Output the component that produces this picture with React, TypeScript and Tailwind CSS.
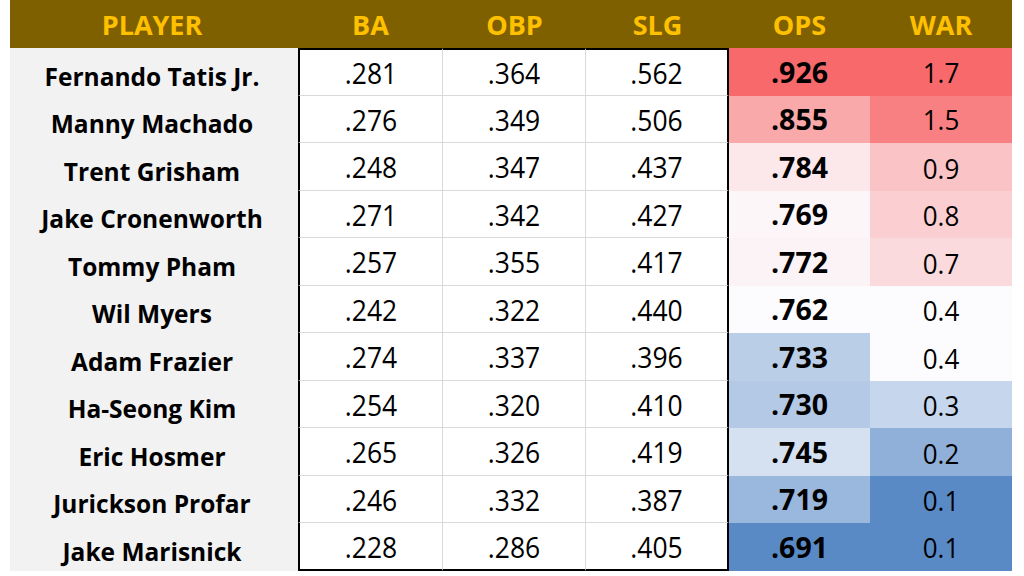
import React from 'react';

type Row = {
    name: string;
    ba: string;
    obp: string;
    slg: string;
    ops: string;
    opsBg: string;
    war: string;
    warBg: string;
};

// colour scale copied from the sheet (red = high, blue = low)
const rows: Row[] = [
    { name: 'Fernando Tatis Jr.', ba: '.281', obp: '.364', slg: '.562', ops: '.926', opsBg: 'bg-[#f8696b]', war: '1.7', warBg: 'bg-[#f8696b]' },
    { name: 'Manny Machado', ba: '.276', obp: '.349', slg: '.506', ops: '.855', opsBg: 'bg-[#faa9ab]', war: '1.5', warBg: 'bg-[#f98082]' },
    { name: 'Trent Grisham', ba: '.248', obp: '.347', slg: '.437', ops: '.784', opsBg: 'bg-[#fce8eb]', war: '0.9', warBg: 'bg-[#fac3c6]' },
    { name: 'Jake Cronenworth', ba: '.271', obp: '.342', slg: '.427', ops: '.769', opsBg: 'bg-[#fcf6f9]', war: '0.8', warBg: 'bg-[#fbcfd1]' },
    { name: 'Tommy Pham', ba: '.257', obp: '.355', slg: '.417', ops: '.772', opsBg: 'bg-[#fcf3f6]', war: '0.7', warBg: 'bg-[#fbdadd]' },
    { name: 'Wil Myers', ba: '.242', obp: '.322', slg: '.440', ops: '.762', opsBg: 'bg-[#fcfcff]', war: '0.4', warBg: 'bg-[#fcfcff]' },
    { name: 'Adam Frazier', ba: '.274', obp: '.337', slg: '.396', ops: '.733', opsBg: 'bg-[#bacee8]', war: '0.4', warBg: 'bg-[#fcfcff]' },
    { name: 'Ha-Seong Kim', ba: '.254', obp: '.320', slg: '.410', ops: '.730', opsBg: 'bg-[#b3c9e5]', war: '0.3', warBg: 'bg-[#c6d6ec]' },
    { name: 'Eric Hosmer', ba: '.265', obp: '.326', slg: '.419', ops: '.745', opsBg: 'bg-[#d5e1f1]', war: '0.2', warBg: 'bg-[#90b0d9]' },
    { name: 'Jurickson Profar', ba: '.246', obp: '.332', slg: '.387', ops: '.719', opsBg: 'bg-[#9ab7dd]', war: '0.1', warBg: 'bg-[#5a8ac6]' },
    { name: 'Jake Marisnick', ba: '.228', obp: '.286', slg: '.405', ops: '.691', opsBg: 'bg-[#5a8ac6]', war: '0.1', warBg: 'bg-[#5a8ac6]' },
];

const headers = ['PLAYER', 'BA', 'OBP', 'SLG', 'OPS', 'WAR'];

export default function App() {
    return (
        <div className="w-[1024px] h-[576px] bg-white pl-[10px] font-['Open_Sans',sans-serif] text-black">
            <div className="grid grid-cols-[288px_145px_143px_143px_141px_142px] grid-rows-[48px_repeat(11,47.5px)]">
                {headers.map((h, i) => (
                    <div key={h} className={`bg-[#7f6000] flex items-center justify-center ${i === 0 ? 'pr-1' : ''}`}>
                        <span className="text-[27px] font-bold text-[#ffc000] leading-none">{h}</span>
                    </div>
                ))}

                {rows.map((r, i) => {
                    const first = i === 0;
                    const last = i === rows.length - 1;
                    const mid = [
                        first ? 'border-t-2 border-t-black' : '',
                        last ? 'border-b-2 border-b-black' : 'border-b border-b-[#d9d9d9]',
                    ].join(' ');
                    return (
                        <React.Fragment key={r.name}>
                            <div className="bg-[#f2f2f2] flex items-center justify-center pr-1 pt-[10px]">
                                <span className="text-[24.5px] font-bold leading-none">{r.name}</span>
                            </div>
                            <div className={`flex items-center justify-center pt-[2px] border-l-2 border-l-black border-r border-r-[#d9d9d9] ${mid}`}>
                                <span className="inline-block scale-y-[1.1] text-[26.5px] leading-none">{r.ba}</span>
                            </div>
                            <div className={`flex items-center justify-center pt-[2px] border-r border-r-[#d9d9d9] ${mid}`}>
                                <span className="inline-block scale-y-[1.1] text-[26.5px] leading-none">{r.obp}</span>
                            </div>
                            <div className={`flex items-center justify-center pt-[2px] border-r-2 border-r-black ${mid}`}>
                                <span className="inline-block scale-y-[1.1] text-[26.5px] leading-none">{r.slg}</span>
                            </div>
                            <div className={`flex items-center justify-center ${r.opsBg}`}>
                                <span className="text-[28.5px] font-bold leading-none">{r.ops}</span>
                            </div>
                            <div className={`flex items-center justify-center pt-[2px] ${r.warBg}`}>
                                <span className="inline-block scale-y-[1.05] text-[26px] leading-none">{r.war}</span>
                            </div>
                        </React.Fragment>
                    );
                })}
            </div>
        </div>
    );
}
